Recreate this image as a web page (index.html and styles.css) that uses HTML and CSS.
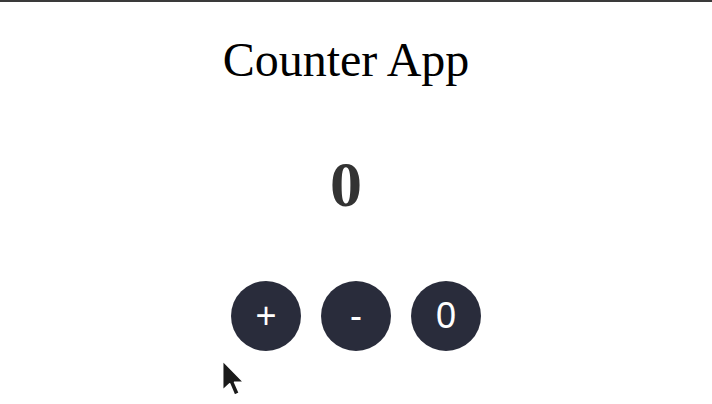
FILE: index.html
```html
<!DOCTYPE html>
<html>
<head>
<meta charset="utf-8">
<link rel="stylesheet" href="styles.css">
</head>
<body>
<div class="app">
  <h1 class="title">Counter App</h1>
  <div class="count">0</div>
  <div class="buttons">
    <button class="btn">+</button>
    <button class="btn">-</button>
    <button class="btn">0</button>
  </div>
</div>
<svg class="cursor" width="26" height="40" viewBox="0 0 24 37">
  <path d="M1.5 1.5 L1.5 29 L8 23 L12.5 33.5 L17 31.5 L12.5 21.5 L21 21.5 Z" fill="#1a1a1a" stroke="#fff" stroke-width="1.5" stroke-linejoin="round"/>
</svg>
</body>
</html>
```
FILE: styles.css
```css
html, body {
  margin: 0;
  padding: 0;
  background: #fff;
}
body {
  border-top: 2px solid #3a3a3a;
  font-family: "Liberation Serif", serif;
  height: 402px;
  position: relative;
  overflow: hidden;
}
.app {
  display: flex;
  flex-direction: column;
  align-items: center;
}
.title {
  margin: 30px 0 0;
  padding-right: 20px;
  font-size: 48px;
  font-weight: normal;
  color: #000;
  line-height: 56px;
}
.count {
  margin-top: 60px;
  padding-right: 20px;
  font-size: 64px;
  font-weight: bold;
  color: #333;
  line-height: 74px;
}
.buttons {
  display: flex;
  gap: 20px;
  margin-top: 59px;
}
.btn {
  width: 70px;
  height: 70px;
  border-radius: 50%;
  border: none;
  background: #292c3b;
  color: #fff;
  font-family: "Liberation Sans", Arial, sans-serif;
  font-size: 36px;
  padding: 0;
  display: flex;
  align-items: center;
  justify-content: center;
}
.cursor {
  position: absolute;
  left: 221px;
  top: 357px;
}
```
